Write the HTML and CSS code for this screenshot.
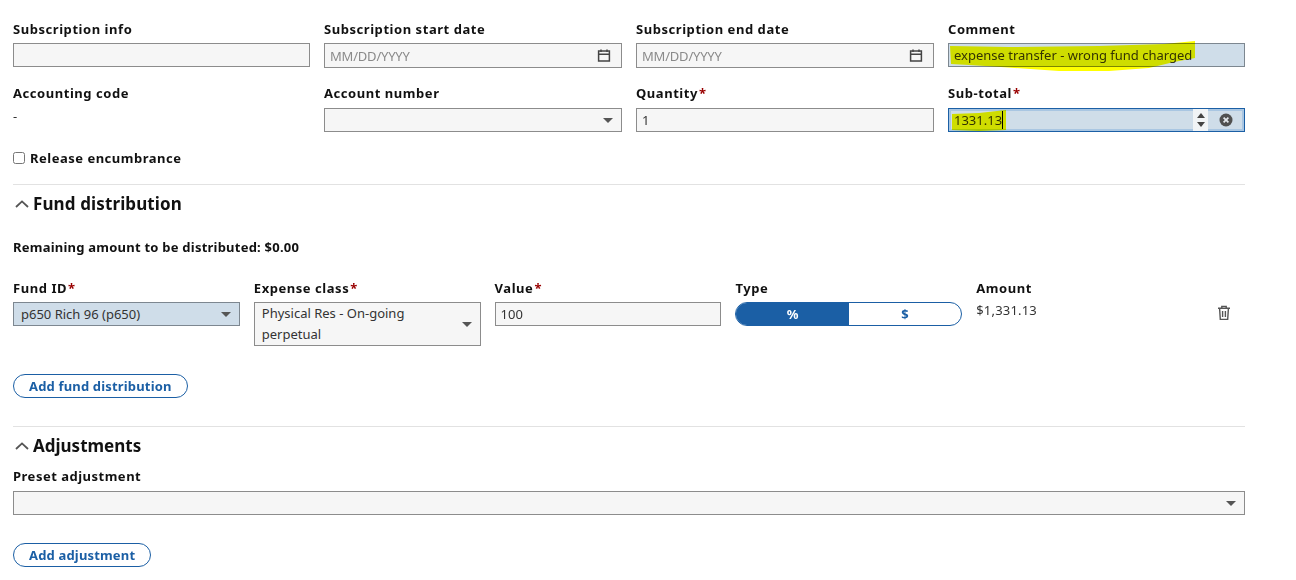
FILE: index.html
```html
<!DOCTYPE html>
<html lang="en">
<head>
<meta charset="utf-8">
<title>Invoice line</title>
<link rel="stylesheet" href="styles.css">
</head>
<body>
<form class="form">
  <div class="grid four">
    <div class="field">
      <label class="label">Subscription info</label>
      <div class="control short"><input class="input" type="text"></div>
    </div>
    <div class="field">
      <label class="label">Subscription start date</label>
      <div class="control"><input class="input" type="text" placeholder="MM/DD/YYYY">
        <svg class="cal" viewBox="0 0 14 14"><path d="M4 1v2.4M10 1v2.4M1.6 2.6h10.8v10H1.6zM1.6 5.8h10.8" fill="none" stroke="#444" stroke-width="1.5"/></svg>
      </div>
    </div>
    <div class="field">
      <label class="label">Subscription end date</label>
      <div class="control"><input class="input" type="text" placeholder="MM/DD/YYYY">
        <svg class="cal" viewBox="0 0 14 14"><path d="M4 1v2.4M10 1v2.4M1.6 2.6h10.8v10H1.6zM1.6 5.8h10.8" fill="none" stroke="#444" stroke-width="1.5"/></svg>
      </div>
    </div>
    <div class="field">
      <label class="label">Comment</label>
      <div class="control short">
        <input class="input changed" type="text" value="expense transfer - wrong fund charged">
        <svg class="marker marker-comment" viewBox="0 0 250 32"><path d="M1 5 L60 6 L150 5 L215 3 L246 0 L246 17 L225 21 L200 27 L160 30 L110 30 L52 26 L20 24 L2 23Z"/></svg>
      </div>
    </div>
  </div>

  <div class="grid four row-two">
    <div class="field">
      <span class="label">Accounting code</span>
      <div class="plain">-</div>
    </div>
    <div class="field">
      <label class="label">Account number</label>
      <div class="select"><span class="caret"></span></div>
    </div>
    <div class="field">
      <label class="label">Quantity<b class="req">*</b></label>
      <div class="control short"><input class="input" type="text" value="1"></div>
    </div>
    <div class="field">
      <label class="label">Sub-total<b class="req">*</b></label>
      <div class="control short">
        <input class="input focused" type="text" value="1331.13">
        <svg class="marker marker-total" viewBox="0 0 58 22"><path d="M3 4 L30 3 L57 0 L57 20 L30 21 L3 20Z"/></svg>
        <span class="cursor"></span>
        <span class="spin"><i class="up"></i><i class="down"></i></span>
        <svg class="clear" viewBox="0 0 14 14"><circle cx="7" cy="7" r="6.5" fill="#505050"/><path d="M4.6 4.6l4.8 4.8M9.4 4.6l-4.8 4.8" stroke="#e4e8ec" stroke-width="1.7"/></svg>
      </div>
    </div>
  </div>

  <label class="check"><input type="checkbox"><span>Release encumbrance</span></label>

  <section class="section fund">
    <h2 class="heading">
      <svg class="chev" viewBox="0 0 14 8"><path d="M1 7l6-5.6L13 7" fill="none" stroke="#555" stroke-width="1.8"/></svg><span>Fund distribution</span>
    </h2>
    <p class="remaining">Remaining amount to be distributed: $0.00</p>
    <div class="grid dist">
      <div class="field">
        <label class="label">Fund ID<b class="req">*</b></label>
        <div class="select changed"><span>p650 Rich 96 (p650)</span><span class="caret"></span></div>
      </div>
      <div class="field">
        <label class="label">Expense class<b class="req">*</b></label>
        <div class="select tall"><span>Physical Res - On-going perpetual</span><span class="caret"></span></div>
      </div>
      <div class="field">
        <label class="label">Value<b class="req">*</b></label>
        <div class="control short"><input class="input" type="text" value="100"></div>
      </div>
      <div class="field">
        <span class="label">Type</span>
        <div class="toggle"><span class="opt on">%</span><span class="opt">$</span></div>
      </div>
      <div class="field amount">
        <span class="label">Amount</span>
        <div class="amount-row">
          <span class="plain money">$1,331.13</span>
          <svg class="trash" viewBox="0 0 14 16"><path d="M1 3.2h12M4.8 3V1.4h4.4V3M2.6 3.4l.7 11h7.4l.7-11M5.6 6v6M8.4 6v6" fill="none" stroke="#555" stroke-width="1.4"/></svg>
        </div>
      </div>
    </div>
    <button class="pill" type="button">Add fund distribution</button>
  </section>

  <section class="section adjust">
    <h2 class="heading">
      <svg class="chev" viewBox="0 0 14 8"><path d="M1 7l6-5.6L13 7" fill="none" stroke="#555" stroke-width="1.8"/></svg><span>Adjustments</span>
    </h2>
    <div class="field preset">
      <label class="label">Preset adjustment</label>
      <div class="select"><span class="caret"></span></div>
    </div>
    <button class="pill" type="button">Add adjustment</button>
  </section>
</form>
</body>
</html>
```

FILE: styles.css
```css
* { box-sizing: border-box; }
html, body { height: 100%; }
body {
  margin: 0;
  background: #fff;
  color: #333;
  font-family: "Noto Sans", "Open Sans", sans-serif;
  font-size: 13px;
  overflow: hidden;
}
.form { width: 1245px; padding: 21px 0 0 13px; }
.grid { display: grid; column-gap: 14px; }
.four { grid-template-columns: 297px 298px 298px 1fr; }
.row-two { margin-top: 17px; }
.row-two .label { margin-bottom: 7px; }
.field { display: flex; flex-direction: column; min-width: 0; }
.label {
  display: block;
  height: 16px;
  margin-bottom: 6px;
  color: #111;
  font-weight: 700;
  font-size: 13px;
  line-height: 16px;
  letter-spacing: .55px;
  white-space: nowrap;
}
.req { margin-left: 1px; color: #900; font-weight: 700; }
.control { position: relative; height: 25px; }
.control.short { height: 24px; }
.input {
  display: block;
  width: 100%;
  height: 100%;
  padding: 0 5px;
  border: 1px solid #8c8c8c;
  border-radius: 0;
  background: #f6f6f6;
  color: #333;
  font: inherit;
  outline: 0;
}
.input::placeholder { color: #8a8a8a; opacity: 1; letter-spacing: -.2px; }
.input.changed { background: #cfdde9; border-color: #7d8790; }
.input.focused { background: #cfdde9; border: 1px solid #1b5fa5; box-shadow: inset 0 0 0 2px #a9c6e2; }
.cal { position: absolute; top: 5px; right: 11px; width: 14px; height: 15px; }
.marker { position: absolute; fill: #ff0; mix-blend-mode: multiply; pointer-events: none; }
.marker-comment { left: 1px; top: -2px; width: 250px; height: 32px; }
.marker-total { left: 1px; top: 2px; width: 58px; height: 22px; }
.cursor { position: absolute; left: 54px; top: 3px; width: 1px; height: 18px; background: #000; }
.spin {
  position: absolute; top: 1px; right: 37px; width: 15px; height: 22px;
  display: flex; flex-direction: column; justify-content: center; gap: 4px; align-items: center;
  background: #f1f4f6;
}
.spin i { display: block; width: 0; height: 0; border-left: 4px solid transparent; border-right: 4px solid transparent; }
.spin .up { border-bottom: 5px solid #444; }
.spin .down { border-top: 5px solid #444; }
.clear { position: absolute; top: 5px; right: 12px; width: 14px; height: 14px; }
.plain { line-height: 16px; color: #333; }
.money { letter-spacing: .2px; }
.select {
  position: relative;
  height: 24px;
  padding: 0 28px 0 7px;
  border: 1px solid #8c8c8c;
  background: #f6f6f6;
  line-height: 22px;
}
.select.changed { background: #cfdde9; border-color: #7d8790; }
.select.tall { height: 44px; line-height: 21px; }
.caret {
  position: absolute; right: 8px; top: 50%; margin-top: -2px;
  width: 0; height: 0;
  border-left: 5px solid transparent; border-right: 5px solid transparent; border-top: 5px solid #555;
}
.check {
  display: flex; align-items: center; gap: 5px;
  margin-top: 18px; height: 16px;
  color: #111; font-weight: 700; letter-spacing: .5px;
}
.check input { width: 12px; height: 12px; margin: 0; }
.section { border-top: 1px solid #e2e2e2; }
.fund { margin-top: 18px; padding-bottom: 28px; }
.heading {
  display: flex; align-items: center; gap: 4px;
  margin: 8px 0 0 0; height: 22px;
  color: #111; font-size: 17px; font-weight: 700; line-height: 22px;
}
.fund .heading span { letter-spacing: .12px; }
.chev { width: 14px; height: 8px; margin-left: 2px; }
.remaining { margin: 24px 0 0 0; height: 16px; line-height: 16px; color: #111; font-weight: 700; letter-spacing: .23px; }
.dist { margin-top: 25px; grid-template-columns: repeat(4, 226.8px) 1fr; min-height: 64px; }
.toggle { display: flex; height: 24px; border: 1px solid #1b5fa5; border-radius: 12px; overflow: hidden; background: #fff; }
.opt { flex: 1; text-align: center; line-height: 22px; color: #1b5fa5; font-weight: 700; }
.opt.on { background: #1b5fa5; color: #fff; }
.amount-row { display: flex; justify-content: space-between; align-items: flex-start; padding-right: 14px; }
.trash { width: 14px; height: 16px; margin-top: 3px; }
.pill {
  display: block;
  height: 24px;
  margin-top: 28px;
  padding: 0 15px;
  border: 1px solid #1b5fa5;
  border-radius: 12px;
  background: #fff;
  color: #1b5fa5;
  font: inherit;
  font-weight: 700;
  letter-spacing: .17px;
}
.adjust .heading { margin-top: 8px; }
.preset { margin-top: 11px; }
.preset .label { margin-bottom: 7px; letter-spacing: .5px; }
```
